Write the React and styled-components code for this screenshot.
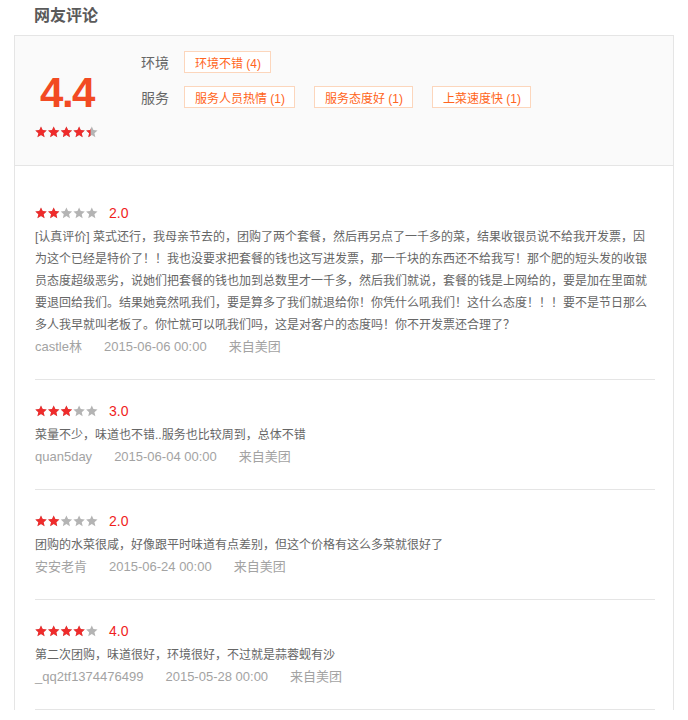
import React from "react";
import styled, { createGlobalStyle } from "styled-components";

const Global = createGlobalStyle`
  html, body { margin: 0; padding: 0; background: #fff; }
  body { font-family: "Liberation Sans", "Noto Sans CJK SC", sans-serif; }
`;

const Page = styled.div`
  width: 660px;
  padding: 4px 0 0 14px;
`;

const Title = styled.h2`
  margin: 0 0 7px;
  padding-left: 20px;
  font-size: 16px;
  line-height: 24px;
  font-weight: bold;
  color: #5a5a5a;
`;

const Card = styled.div`
  border: 1px solid #e5e5e5;
  border-bottom: none;
`;

const Summary = styled.div`
  display: flex;
  align-items: flex-start;
  background: #fafafa;
  border-bottom: 1px solid #e5e5e5;
  padding: 15px 20px 27px;
`;

const ScoreCol = styled.div`
  width: 64px;
  margin-right: 42px;
  padding-top: 21px;
  display: flex;
  flex-direction: column;
  align-items: center;
`;

const BigScore = styled.div`
  font-family: "Liberation Sans", Arial, sans-serif;
  font-size: 42px;
  line-height: 42px;
  font-weight: bold;
  letter-spacing: -1.5px;
  color: #f24a22;
  margin-bottom: 12px;
`;

const TagRows = styled.div`
  display: flex;
  flex-direction: column;
  gap: 13px;
`;

const TagRow = styled.div`
  display: flex;
  align-items: center;
  height: 22px;
`;

const Label = styled.span`
  font-size: 14px;
  color: #666;
  width: 26px;
  margin-right: 17px;
  white-space: nowrap;
`;

const Tags = styled.div`
  display: flex;
  gap: 19px;
`;

const Tag = styled.span`
  display: inline-flex;
  align-items: center;
  height: 20px;
  padding: 0 9px 0 10px;
  border: 1px solid #fcd6bc;
  background: #fff;
  color: #ff6420;
  font-size: 12px;
  white-space: nowrap;
`;

const Body = styled.div`
  padding: 16px 18px 0 20px;
`;

const Review = styled.div`
  padding: 22px 0 21px;
  border-bottom: 1px solid #e5e5e5;
`;

const RateRow = styled.div`
  display: flex;
  align-items: center;
  height: 18px;
  margin-bottom: 4px;
`;

const Score = styled.span`
  font-family: "Liberation Sans", Arial, sans-serif;
  font-size: 14px;
  color: #f01e1e;
  margin-left: 10px;
`;

const Text = styled.p`
  margin: 0;
  font-size: 12px;
  line-height: 22px;
  color: #666;
`;

const Meta = styled.div`
  display: flex;
  gap: 22px;
  font-size: 13px;
  line-height: 22px;
  color: #a3a3a3;
`;

const STAR =
  "M6 0.4 L7.65 4.1 L11.7 4.5 L8.65 7.2 L9.55 11.2 L6 9.1 L2.45 11.2 L3.35 7.2 L0.3 4.5 L4.35 4.1 Z";

function Stars({ value, id }) {
  const pitch = 12.7;
  return (
    <svg width="64" height="12" viewBox="0 0 64 12">
      <defs>
        {[0, 1, 2, 3, 4].map((i) => {
          const f = Math.max(0, Math.min(1, value - i));
          return (
            <clipPath key={i} id={`${id}-c${i}`}>
              <rect x="0" y="0" width={12 * f} height="12" />
            </clipPath>
          );
        })}
      </defs>
      {[0, 1, 2, 3, 4].map((i) => (
        <g key={i} transform={`translate(${i * pitch} 0)`}>
          <path d={STAR} fill="#b4b4b4" />
          <path d={STAR} fill="#ef2b2b" clipPath={`url(#${id}-c${i})`} />
        </g>
      ))}
    </svg>
  );
}

const reviews = [
  {
    score: 2,
    text:
      "[认真评价] 菜式还行，我母亲节去的，团购了两个套餐，然后再另点了一千多的菜，结果收银员说不给我开发票，因为这个已经是特价了！！我也没要求把套餐的钱也这写进发票，那一千块的东西还不给我写！那个肥的短头发的收银员态度超级恶劣，说她们把套餐的钱也加到总数里才一千多，然后我们就说，套餐的钱是上网给的，要是加在里面就要退回给我们。结果她竟然吼我们，要是算多了我们就退给你！你凭什么吼我们！这什么态度！！！要不是节日那么多人我早就叫老板了。你忙就可以吼我们吗，这是对客户的态度吗！你不开发票还合理了？",
    user: "castle林",
    date: "2015-06-06 00:00",
  },
  {
    score: 3,
    text: "菜量不少，味道也不错..服务也比较周到，总体不错",
    user: "quan5day",
    date: "2015-06-04 00:00",
  },
  {
    score: 2,
    text: "团购的水菜很咸，好像跟平时味道有点差别，但这个价格有这么多菜就很好了",
    user: "安安老肯",
    date: "2015-06-24 00:00",
  },
  {
    score: 4,
    text: "第二次团购，味道很好，环境很好，不过就是蒜蓉蚬有沙",
    user: "_qq2tf1374476499",
    date: "2015-05-28 00:00",
  },
];

export default function App() {
  return (
    <>
      <Global />
      <Page>
        <Title>网友评论</Title>
        <Card>
          <Summary>
            <ScoreCol>
              <BigScore>4.4</BigScore>
              <Stars value={4.4} id="sum" />
            </ScoreCol>
            <TagRows>
              <TagRow>
                <Label>环境</Label>
                <Tags>
                  <Tag>环境不错 (4)</Tag>
                </Tags>
              </TagRow>
              <TagRow>
                <Label>服务</Label>
                <Tags>
                  <Tag>服务人员热情 (1)</Tag>
                  <Tag>服务态度好 (1)</Tag>
                  <Tag>上菜速度快 (1)</Tag>
                </Tags>
              </TagRow>
            </TagRows>
          </Summary>
          <Body>
            {reviews.map((r, i) => (
              <Review key={i}>
                <RateRow>
                  <Stars value={r.score} id={`r${i}`} />
                  <Score>{r.score.toFixed(1)}</Score>
                </RateRow>
                <Text>{r.text}</Text>
                <Meta>
                  <span>{r.user}</span>
                  <span>{r.date}</span>
                  <span>来自美团</span>
                </Meta>
              </Review>
            ))}
          </Body>
        </Card>
      </Page>
    </>
  );
}
